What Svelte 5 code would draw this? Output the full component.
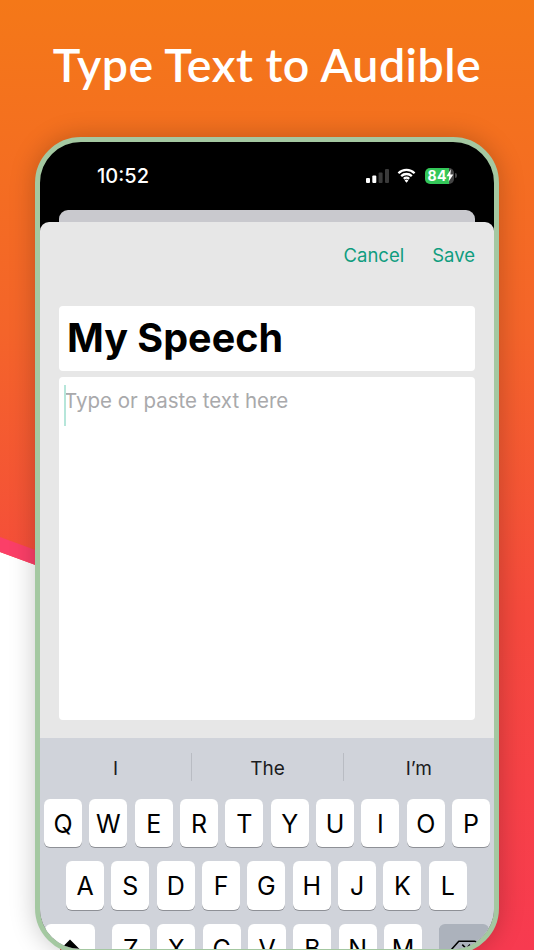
<script>
	const suggestions = ['I', 'The', 'I’m'];
	const row1 = ['Q', 'W', 'E', 'R', 'T', 'Y', 'U', 'I', 'O', 'P'];
	const row2 = ['A', 'S', 'D', 'F', 'G', 'H', 'J', 'K', 'L'];
	const row3 = ['Z', 'X', 'C', 'V', 'B', 'N', 'M'];
</script>

<div class="page">
	<svg class="wedge" width="60" height="950" viewBox="0 0 60 950" aria-hidden="true">
		<polygon points="0,552 60,574 60,950 0,950" fill="#ffffff" />
		<polygon points="0,537 60,559 60,574 0,552" fill="#fb3f68" />
	</svg>

	<h1>Type Text to Audible</h1>

	<div class="phone">
		<div class="status">
			<span class="time">10:52</span>
			<div class="indicators">
				<svg width="23" height="14" viewBox="0 0 23 14" aria-hidden="true">
					<rect x="0" y="9" width="4" height="5" rx="1" fill="#fff" />
					<rect x="6.3" y="6.5" width="4" height="7.5" rx="1" fill="#fff" />
					<rect x="12.6" y="3.5" width="4" height="10.5" rx="1" fill="#3a3a3a" />
					<rect x="19" y="0" width="4" height="14" rx="1" fill="#3a3a3a" />
				</svg>
				<svg class="wifi" width="19" height="15" viewBox="0 0 20 15" aria-hidden="true">
					<path d="M1.5 5.2a12 12 0 0 1 17 0M4.4 8.2a8 8 0 0 1 11.2 0M7.2 11a4 4 0 0 1 5.6 0" fill="none" stroke="#fff" stroke-width="2.4" />
					<path d="M10 15l-2-2.2a2.8 2.8 0 0 1 4 0z" fill="#fff" />
				</svg>
				<div class="battery">
					<span class="level">84</span>
					<svg class="bolt" width="8" height="13" viewBox="0 0 8 13" aria-hidden="true">
						<path d="M5 0L0.5 7.3h2.8L2.6 13 7.5 5.4H4.5z" fill="#fff" />
					</svg>
					<i class="cap"></i>
				</div>
			</div>
		</div>

		<div class="back-sheet"></div>

		<div class="sheet">
			<div class="actions">
				<span>Cancel</span>
				<span>Save</span>
			</div>
			<div class="title-field">My Speech</div>
			<div class="text-field">
				<i class="caret"></i>
				<span>Type or paste text here</span>
			</div>

			<div class="keyboard">
				<div class="suggestions">
					{#each suggestions as word}
						<span>{word}</span>
					{/each}
				</div>
				<div class="row">
					{#each row1 as key}
						<div class="key">{key}</div>
					{/each}
				</div>
				<div class="row second">
					{#each row2 as key}
						<div class="key">{key}</div>
					{/each}
				</div>
				<div class="row third">
					<div class="key wide">
						<svg width="22" height="20" viewBox="0 0 22 20" aria-hidden="true">
							<path d="M11 0.5L1 10.5h5v8.5h10v-8.5h5z" fill="#000" />
						</svg>
					</div>
					<div class="letters">
						{#each row3 as key}
							<div class="key">{key}</div>
						{/each}
					</div>
					<div class="key wide dark">
						<svg width="26" height="20" viewBox="0 0 30 22" aria-hidden="true">
							<path d="M9 2h18a2 2 0 0 1 2 2v14a2 2 0 0 1-2 2H9L1 11z" fill="none" stroke="#000" stroke-width="1.8" stroke-linejoin="round" />
							<path d="M13 6l9 9M22 6l-9 9" stroke="#000" stroke-width="1.8" />
						</svg>
					</div>
				</div>
			</div>
		</div>
	</div>
</div>

<style>
	:global(body) {
		margin: 0;
	}
	.page {
		position: relative;
		width: 534px;
		height: 950px;
		overflow: hidden;
		background: linear-gradient(180deg, #f47818 0%, #f4642a 35%, #f5493d 65%, #f73a50 100%);
		font-family: Inter, "Liberation Sans", sans-serif;
	}
	.wedge {
		position: absolute;
		top: 0;
		left: 0;
	}
	h1 {
		position: relative;
		box-sizing: border-box;
		height: 137px;
		margin: 0;
		padding-top: 35px;
		text-align: center;
		color: #fff;
		font-family: Lato, sans-serif;
		font-weight: 600;
		font-size: 46.5px;
		line-height: 58px;
		letter-spacing: 0.5px;
	}
	.phone {
		position: relative;
		box-sizing: border-box;
		width: 464px;
		height: 816.5px;
		margin-left: 35px;
		border: 5.5px solid #a4c8a1;
		border-radius: 46px;
		background: #000;
		overflow: hidden;
		box-shadow: 0 0 26px rgba(0, 0, 0, 0.22);
	}
	.status {
		display: flex;
		justify-content: space-between;
		align-items: center;
		height: 67.5px;
		padding: 0 40.5px 0 57px;
		color: #fff;
	}
	.time {
		font-size: 20px;
		font-weight: 500;
	}
	.indicators {
		display: flex;
		align-items: center;
		gap: 8px;
	}
	.wifi {
		margin-right: 1px;
	}
	.battery {
		position: relative;
		display: flex;
		align-items: center;
		box-sizing: border-box;
		width: 29px;
		height: 16px;
		padding-left: 3px;
		border-radius: 5px;
		background: linear-gradient(90deg, #34c759 82%, #444 82%);
		font-size: 14px;
		font-weight: 700;
		letter-spacing: 0.3px;
	}
	.bolt {
		margin-left: -1px;
	}
	.cap {
		position: absolute;
		top: 5.5px;
		right: -3px;
		width: 2px;
		height: 5px;
		border-radius: 0 2px 2px 0;
		background: #444;
	}
	.back-sheet {
		height: 30px;
		margin: 0 19px;
		border-radius: 9px 9px 0 0;
		background: #c9c9ce;
	}
	.sheet {
		position: absolute;
		top: 79.5px;
		left: 0;
		right: 0;
		bottom: 0;
		border-radius: 9px 9px 0 0;
		background: #e7e7e7;
	}
	.actions {
		display: flex;
		justify-content: flex-end;
		gap: 28px;
		height: 84px;
		padding: 21px 19px 0 0;
		box-sizing: border-box;
		color: #0f9d7f;
		font-size: 18.5px;
		line-height: 24px;
	}
	.title-field {
		box-sizing: border-box;
		height: 65px;
		margin: 0 19px 6px;
		padding-left: 8px;
		border-radius: 4px;
		background: #fff;
		color: #000;
		font-size: 39.5px;
		font-weight: 700;
		line-height: 65px;
	}
	.text-field {
		position: relative;
		box-sizing: border-box;
		height: 343px;
		margin: 0 19px 18px;
		padding: 10px 0 0 5px;
		border-radius: 4px;
		background: #fff;
		color: #a9a9ab;
		font-size: 20.5px;
		line-height: 28px;
	}
	.caret {
		position: absolute;
		top: 8px;
		left: 5px;
		width: 2px;
		height: 41px;
		background: #b6e6da;
	}
	.keyboard {
		height: 300px;
		background: #d0d3da;
	}
	.suggestions {
		display: grid;
		grid-template-columns: repeat(3, 1fr);
		height: 61px;
		padding: 15px 0 0;
		box-sizing: border-box;
		color: #1c1c1e;
		font-size: 19px;
	}
	.suggestions span {
		height: 28px;
		line-height: 31px;
		text-align: center;
	}
	.suggestions span + span {
		border-left: 1px solid #b9bcc3;
	}
	.row {
		display: flex;
		gap: 7.35px;
		padding: 0 4px;
		margin-bottom: 14px;
	}
	.second {
		padding-left: 26px;
	}
	.third {
		justify-content: space-between;
		padding: 0 5px;
	}
	.letters {
		display: flex;
		gap: 7.35px;
	}
	.key {
		flex: none;
		box-sizing: border-box;
		display: flex;
		align-items: center;
		justify-content: center;
		width: 38px;
		height: 48.5px;
		padding-top: 2px;
		border-radius: 6px;
		background: #fff;
		box-shadow: 0 1px 0 #8e9096;
		color: #000;
		font-size: 25px;
	}
	.wide {
		width: 50px;
	}
	.dark {
		background: #acb2bc;
	}
</style>
